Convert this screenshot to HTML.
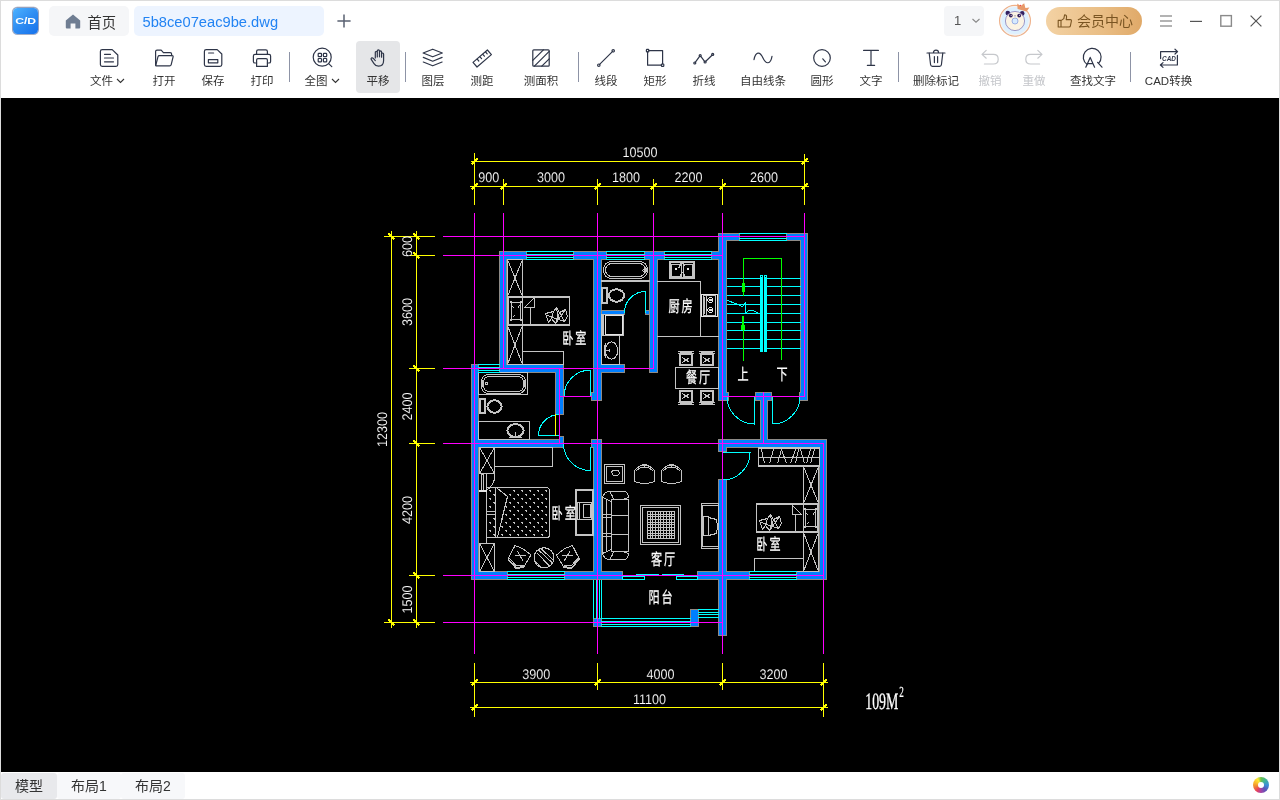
<!DOCTYPE html>
<html lang="zh-CN">
<head>
<meta charset="utf-8">
<title>5b8ce07eac9be.dwg</title>
<style>
*{box-sizing:border-box;margin:0;padding:0}
html,body{width:1280px;height:800px;overflow:hidden;background:#fff}
body{font-family:"Liberation Sans","Noto Sans CJK SC",sans-serif;color:#333;position:relative}
#win{position:absolute;left:0;top:0;width:1280px;height:800px;background:#fff;border:1px solid #dcdcdc}
.abs{position:absolute}
#ui{position:absolute;left:0;top:0;width:1280px;height:800px;will-change:transform}
#logo{left:12.5px;top:8px;width:25.5px;height:26px;border-radius:4.5px;background:linear-gradient(140deg,#4db2ff 0%,#2f8df2 50%,#1571ec 100%);box-shadow:0 0 0 1px rgba(112,128,170,.55),0 -.5px 0 1px rgba(90,105,140,.35)}
#logo svg{position:absolute;left:0;top:0}
.tab{top:6px;height:30px;border-radius:5px;font-size:14px;line-height:30px;white-space:nowrap}
#tab-home{left:49px;width:80px;background:#f5f6f8;color:#333}
#tab-home span{position:absolute;left:38.5px;top:1.5px;font-size:14.3px}
#tab-file{left:134px;width:190px;background:#edf4ff;color:#2283f3}
#tab-file span{position:absolute;left:8.5px;top:1px;font-size:14.7px;letter-spacing:0}
#sel{left:944px;top:6px;width:40px;height:30px;border-radius:4px;background:#f5f6f8;font-size:13px;line-height:29px;color:#444}
#vip{left:1046px;top:7px;width:96px;height:28px;border-radius:14px;background:linear-gradient(90deg,#f3d2a4 0%,#e9bd84 60%,#e0a968 100%);color:#7a5522;font-size:14px;line-height:28px}
.tool{top:41px;height:52px;text-align:center;font-size:11.5px;color:#333;white-space:nowrap}
.tool .lb{position:absolute;left:-20px;right:-20px;top:32px;line-height:16px;text-align:center}
.tool svg{position:absolute;left:50%;top:5px;margin-left:-12px}
.tool.dis{color:#c3c5c9}
.sep{top:52px;width:1px;height:30px;background:#8d93a6}
#hl{left:356px;top:41px;width:44px;height:52px;border-radius:4px;background:#e5e6e8}
#cv{left:1px;top:98px;width:1278px;height:674px;background:#000;overflow:hidden;will-change:transform}
.btab{top:772px;height:27px;font-size:14px;line-height:27px;text-align:center;color:#333;background:#f7f8fa}
</style>
</head>
<body>
<div id="win"></div>
<div id="ui">
<div class="abs" id="logo"><svg width="26" height="26" viewBox="0 0 26 26"><text transform="translate(2.2,16) scale(1.32,1)" font-family="Liberation Sans,sans-serif" font-size="9.2" font-weight="bold" fill="#fff">C/D</text></svg></div>
<div class="abs tab" id="tab-home"><svg class="abs" style="left:16px;top:7.5px" width="16" height="15" viewBox="0 0 16 15"><path d="M8 .6 L15.2 6.6 V13.4 Q15.2 14.4 14.2 14.4 H10.4 V9.6 H5.6 V14.4 H1.8 Q.8 14.4 .8 13.4 V6.6 Z" fill="#6f7d92"/></svg><span>首页</span></div>
<div class="abs tab" id="tab-file"><span>5b8ce07eac9be.dwg</span></div>
<svg class="abs" style="left:336px;top:13px" width="16" height="16" viewBox="0 0 16 16"><path d="M8 1.4 V14.6 M1.4 8 H14.6" stroke="#5a6172" stroke-width="1.5" fill="none"/></svg>
<div class="abs" id="sel"><span class="abs" style="left:10px;top:0;color:#555;font-size:13px">1</span><svg class="abs" style="left:27px;top:11px" width="10" height="8" viewBox="0 0 10 8"><path d="M1.5 2 L5 5.2 L8.5 2" fill="none" stroke="#888" stroke-width="1.1"/></svg></div>
<svg class="abs" style="left:996px;top:0" width="40" height="40" viewBox="0 0 40 40">
<circle cx="19" cy="20.7" r="15.4" fill="#ddf0ff" stroke="#efb088" stroke-width="1.2"/>
<circle cx="19" cy="20.7" r="14.3" fill="none" stroke="#fdf3ea" stroke-width=".9"/>
<circle cx="11.8" cy="13.1" r="2.3" fill="#33205f"/><circle cx="26.2" cy="13.4" r="2.3" fill="#33205f"/>
<circle cx="19" cy="21" r="9.6" fill="#fbf3e4" stroke="#6a5aa8" stroke-width=".6"/>
<circle cx="14.8" cy="15.6" r="1.9" fill="#33205f"/><circle cx="23.2" cy="15.6" r="1.9" fill="#33205f"/>
<circle cx="15.2" cy="15.2" r=".55" fill="#fff"/><circle cx="23.6" cy="15.2" r=".55" fill="#fff"/>
<ellipse cx="19" cy="15.8" rx=".8" ry=".6" fill="#8a8a96"/>
<circle cx="19" cy="21" r="3" fill="#d6eaff" stroke="#8a9fe0" stroke-width=".8"/>
<path d="M21.6 9 L21.2 3.4 L24.6 6 L28.2 3.2 L29.4 8 L33.4 7.4 L30.6 11.6 Z" fill="#e8996a"/>
<circle cx="24.4" cy="5.4" r=".6" fill="#f03a4a"/>
</svg>
<div class="abs" id="vip"><svg class="abs" style="left:11px;top:6px" width="16" height="16" viewBox="0 0 16 16" fill="none" stroke="#7a5522" stroke-width="1.1" stroke-linejoin="round"><path d="M1.2 7.4 H4 V14 H1.2 Z M4 7.6 L6.8 5.6 L7.6 1.8 Q9.6 1.8 9.6 4 L9.2 6.6 H13.2 Q14.6 6.6 14.4 8 L13.4 12.8 Q13.2 14 12 14 H4"/></svg><span class="abs" style="left:31px;top:0">会员中心</span></div>
<svg class="abs" style="left:1150px;top:9px" width="120" height="24" viewBox="0 0 120 24" fill="none">
<path d="M10 7 H22 M10 12 H22 M10 17 H22" stroke="#9a9a9a" stroke-width="1.3"/>
<path d="M40 12.4 H52" stroke="#555" stroke-width="1.2"/>
<rect x="70.8" y="6.6" width="10.6" height="10.6" stroke="#8a8a8a" stroke-width="1.4"/>
<path d="M100.6 6.6 L111.4 17.4 M111.4 6.6 L100.6 17.4" stroke="#555" stroke-width="1.2"/>
</svg>
<div class="abs" id="hl"></div>
<div class="abs tool" style="left:87px;width:44px"><svg width="24" height="24" viewBox="0 0 24 24" fill="none" stroke="#2e3548" stroke-width="1.2" stroke-linecap="round" stroke-linejoin="round"><path d="M5.2 3.6 H15.2 L20.8 9 V18.6 Q20.8 20.4 19 20.4 H5.2 Q3.4 20.4 3.4 18.6 V5.4 Q3.4 3.6 5.2 3.6Z"/><path d="M7.5 8.3 H13.5 M7.5 12 H16.5 M7.5 15.8 H16.5"/></svg><div class="lb" style="left:-23px">文件<svg class="chv" width="9" height="8" viewBox="0.5 0 9 8" style="position:static;display:inline-block;margin:0 0 0 3px;vertical-align:0"><path d="M1.5 2 L5 5.5 L8.5 2" fill="none" stroke="#333" stroke-width="1.1"/></svg></div></div>
<div class="abs tool" style="left:142.0px;width:44px"><svg width="24" height="24" viewBox="0 0 24 24" fill="none" stroke="#2e3548" stroke-width="1.2" stroke-linecap="round" stroke-linejoin="round"><path d="M3.6 19 V5.6 Q3.6 4.2 5 4.2 H9.2 L11.4 6.6 H18.2 Q19.6 6.6 19.6 8 V9.6"/><path d="M3.7 19.6 L6 10.6 Q6.3 9.6 7.4 9.6 H20 Q21.4 9.6 21.1 10.9 L19.2 18.6 Q18.9 19.9 17.6 19.9 H4.6 Q3.6 19.9 3.7 19.2"/></svg><div class="lb">打开</div></div>
<div class="abs tool" style="left:191.0px;width:44px"><svg width="24" height="24" viewBox="0 0 24 24" fill="none" stroke="#2e3548" stroke-width="1.2" stroke-linecap="round" stroke-linejoin="round"><path d="M5.2 3.6 H16.2 L20.8 8 V18.6 Q20.8 20.4 19 20.4 H5.2 Q3.4 20.4 3.4 18.6 V5.4 Q3.4 3.6 5.2 3.6Z"/><path d="M7.6 7 H12.6"/><rect x="7.4" y="13.6" width="9.4" height="3.2"/></svg><div class="lb">保存</div></div>
<div class="abs tool" style="left:240.0px;width:44px"><svg width="24" height="24" viewBox="0 0 24 24" fill="none" stroke="#2e3548" stroke-width="1.2" stroke-linecap="round" stroke-linejoin="round"><path d="M6.6 8.4 V5.4 Q6.6 3.8 8.2 3.8 H15.8 Q17.4 3.8 17.4 5.4 V8.4"/><path d="M6.6 17 H5 Q3.4 17 3.4 15.4 V10 Q3.4 8.4 5 8.4 H19 Q20.6 8.4 20.6 10 V15.4 Q20.6 17 19 17 H17.4"/><path d="M6.6 20.4 V14 Q6.6 12.6 8 12.6 H16 Q17.4 12.6 17.4 14 V20.4 Z"/></svg><div class="lb">打印</div></div>
<div class="abs tool" style="left:300.0px;width:44px"><svg width="24" height="24" viewBox="0 0 24 24" fill="none" stroke="#2e3548" stroke-width="1.2" stroke-linecap="round" stroke-linejoin="round"><circle cx="12.2" cy="11.2" r="9"/><path d="M18.7 17.6 L21.8 20.7"/><rect x="8.2" y="7.3" width="3.3" height="3.3" rx=".6"/><rect x="13.4" y="7.3" width="3.3" height="3.3" rx=".6"/><rect x="8.2" y="12.5" width="3.3" height="3.3" rx=".6"/><rect x="13.4" y="12.5" width="3.3" height="3.3" rx=".6"/></svg><div class="lb">全图<svg class="chv" width="9" height="8" viewBox="0.5 0 9 8" style="position:static;display:inline-block;margin:0 0 0 3px;vertical-align:0"><path d="M1.5 2 L5 5.5 L8.5 2" fill="none" stroke="#333" stroke-width="1.1"/></svg></div></div>
<div class="abs tool" style="left:356.0px;width:44px"><svg width="24" height="24" viewBox="0 0 24 24" fill="none" stroke="#2e3548" stroke-width="1.2" stroke-linecap="round" stroke-linejoin="round"><path d="M9.3 12 V6.6 Q9.3 5.5 10.3 5.5 Q11.3 5.5 11.3 6.6 V11 M11.3 10.8 V5 Q11.3 3.9 12.4 3.9 Q13.5 3.9 13.5 5 V10.8 M13.5 10.8 V5.9 Q13.5 4.9 14.5 4.9 Q15.6 4.9 15.6 5.9 V11.2 M15.6 11.2 V8 Q15.6 7 16.6 7 Q17.6 7 17.6 8 V14.6 Q17.6 20.2 12.6 20.2 Q9.6 20.2 8 17.6 L5.2 13.4 Q4.7 12.4 5.6 11.9 Q6.5 11.5 7.3 12.4 L9.3 14.6"/></svg><div class="lb">平移</div></div>
<div class="abs tool" style="left:411.0px;width:44px"><svg width="24" height="24" viewBox="0 0 24 24" fill="none" stroke="#2e3548" stroke-width="1.2" stroke-linecap="round" stroke-linejoin="round"><path d="M11.7 3.2 L21.3 7 L11.7 10.8 L2.1 7 Z"/><path d="M2.3 11.4 L11.7 15.2 L21.1 11.4"/><path d="M2.3 16 L11.7 19.8 L21.1 16"/></svg><div class="lb">图层</div></div>
<div class="abs tool" style="left:460.0px;width:44px"><svg width="24" height="24" viewBox="0 0 24 24" fill="none" stroke="#2e3548" stroke-width="1.2" stroke-linecap="round" stroke-linejoin="round"><path d="M3 16.4 L17.4 4 L21.4 8.6 L7 21 Z"/><path d="M7.2 13.2 L8.8 15 M10 10.8 L11.6 12.6 M12.8 8.4 L14.4 10.2 M15.6 6 L17.2 7.8"/></svg><div class="lb">测距</div></div>
<div class="abs tool" style="left:519.0px;width:44px"><svg width="24" height="24" viewBox="0 0 24 24" fill="none" stroke="#2e3548" stroke-width="1.2" stroke-linecap="round" stroke-linejoin="round"><rect x="3.8" y="3.8" width="16.4" height="16.4" rx="1"/><path d="M3.8 14.4 L14.4 3.8 M5.4 20.2 L20.2 5.4 M12.8 20.2 L20.2 12.8"/></svg><div class="lb">测面积</div></div>
<div class="abs tool" style="left:584.0px;width:44px"><svg width="24" height="24" viewBox="0 0 24 24" fill="none" stroke="#2e3548" stroke-width="1.2" stroke-linecap="round" stroke-linejoin="round"><path d="M5.6 18.4 L18.4 5.6"/><circle cx="4.8" cy="19.2" r="1.2"/><circle cx="19.2" cy="4.8" r="1.2"/></svg><div class="lb">线段</div></div>
<div class="abs tool" style="left:633.0px;width:44px"><svg width="24" height="24" viewBox="0 0 24 24" fill="none" stroke="#2e3548" stroke-width="1.2" stroke-linecap="round" stroke-linejoin="round"><path d="M4.6 5.8 V19.2 H18.4 M19.6 18 V4.6 H5.8"/><rect x="3.4" y="3.4" width="2.4" height="2.4" rx=".6"/><rect x="18.4" y="18" width="2.4" height="2.4" rx=".6"/></svg><div class="lb">矩形</div></div>
<div class="abs tool" style="left:682.0px;width:44px"><svg width="24" height="24" viewBox="0 0 24 24" fill="none" stroke="#2e3548" stroke-width="1.2" stroke-linecap="round" stroke-linejoin="round"><path d="M3.4 16.2 L7.6 10.4 M9 10.6 L12.4 15.2 M13.8 15.2 L20 9.2"/><circle cx="2.8" cy="17" r="1"/><circle cx="8.2" cy="9.6" r="1"/><circle cx="13.1" cy="16" r="1"/><circle cx="20.7" cy="8.4" r="1"/></svg><div class="lb">折线</div></div>
<div class="abs tool" style="left:741.0px;width:44px"><svg width="24" height="24" viewBox="0 0 24 24" fill="none" stroke="#2e3548" stroke-width="1.2" stroke-linecap="round" stroke-linejoin="round"><path d="M3 13.6 C4.6 5.6 8.8 5 12 12 C15 18.6 19.6 18.6 21 10.4"/></svg><div class="lb">自由线条</div></div>
<div class="abs tool" style="left:800.0px;width:44px"><svg width="24" height="24" viewBox="0 0 24 24" fill="none" stroke="#2e3548" stroke-width="1.2" stroke-linecap="round" stroke-linejoin="round"><circle cx="12" cy="12" r="8.3"/><path d="M12.8 12.8 L15.4 15.8"/></svg><div class="lb">圆形</div></div>
<div class="abs tool" style="left:849.0px;width:44px"><svg width="24" height="24" viewBox="0 0 24 24" fill="none" stroke="#2e3548" stroke-width="1.2" stroke-linecap="round" stroke-linejoin="round"><path d="M4.6 4.4 H19.4 M12 4.4 V19.4 M8.4 19.4 H15.6"/></svg><div class="lb">文字</div></div>
<div class="abs tool" style="left:914.0px;width:44px"><svg width="24" height="24" viewBox="0 0 24 24" fill="none" stroke="#2e3548" stroke-width="1.2" stroke-linecap="round" stroke-linejoin="round"><path d="M3 7 H21 M9.4 7 Q9.4 4.2 12 4.2 Q14.6 4.2 14.6 7"/><path d="M5.2 7 L6.6 18.8 Q6.8 20.4 8.4 20.4 H15.6 Q17.2 20.4 17.4 18.8 L18.8 7"/><path d="M10.4 10.6 V16.6 M13.6 10.6 V16.6"/></svg><div class="lb">删除标记</div></div>
<div class="abs tool dis" style="left:968.0px;width:44px"><svg width="24" height="24" viewBox="0 0 24 24" fill="none" stroke="#c6c8cc" stroke-width="1.2" stroke-linecap="round" stroke-linejoin="round"><path d="M8.2 4.4 L4 8.4 L8.2 12.2 M4.4 8.4 H15.4 Q20.2 8.4 20.2 13.2 Q20.2 18 15.4 18 H6.4"/></svg><div class="lb">撤销</div></div>
<div class="abs tool dis" style="left:1012.0px;width:44px"><svg width="24" height="24" viewBox="0 0 24 24" fill="none" stroke="#c6c8cc" stroke-width="1.2" stroke-linecap="round" stroke-linejoin="round"><path d="M15.8 4.4 L20 8.4 L15.8 12.2 M19.6 8.4 H8.6 Q3.8 8.4 3.8 13.2 Q3.8 18 8.6 18 H17.6"/></svg><div class="lb">重做</div></div>
<div class="abs tool" style="left:1071.0px;width:44px"><svg width="24" height="24" viewBox="0 0 24 24" fill="none" stroke="#2e3548" stroke-width="1.2" stroke-linecap="round" stroke-linejoin="round"><path d="M6.2 18.6 A8.9 8.9 0 1 1 17.6 17.4 M16.6 16.4 L21 21.2"/><path d="M4.8 21.2 L9.2 11.4 L13.6 21.2 M6.5 17.6 H11.9"/></svg><div class="lb">查找文字</div></div>
<div class="abs tool" style="left:1146.5px;width:44px"><svg width="24" height="24" viewBox="0 0 24 24" fill="none" stroke="#2e3548" stroke-width="1.2" stroke-linecap="round" stroke-linejoin="round"><path d="M3.6 12.6 V5.6 H20.4 M18 3.2 L20.6 5.6 L18 8"/><path d="M20.4 9.4 V19 H3.6 M6 16.6 L3.4 19 L6 21.4"/><text x="12" y="14.6" font-family="Liberation Sans,sans-serif" font-size="6.4" font-weight="bold" font-style="italic" text-anchor="middle" fill="#2e3548" stroke="none">CAD</text></svg><div class="lb">CAD转换</div></div>
<div class="abs sep" style="left:289px"></div>
<div class="abs sep" style="left:405px"></div>
<div class="abs sep" style="left:578px"></div>
<div class="abs sep" style="left:898px"></div>
<div class="abs sep" style="left:1130px"></div>
<div class="abs btab" style="left:1px;width:56px;background:#e8e9ec;border-radius:3px;top:773px;height:26px;line-height:26px">模型</div>
<div class="abs btab" style="left:57px;width:64px;border-radius:3px;top:773px;height:26px;line-height:26px">布局1</div>
<div class="abs btab" style="left:121px;width:64px;border-radius:3px;top:773px;height:26px;line-height:26px">布局2</div>
<div class="abs" style="left:1253px;top:777px;width:16px;height:16px;border-radius:50%;background:conic-gradient(#6cc04a,#3fb49a 12%,#3b8fd8 25%,#5a55b8 38%,#a443a8 50%,#e8415a 60%,#f08a32 72%,#fbc02d 82%,#fdea3a 92%,#6cc04a)"><div class="abs" style="left:5px;top:5px;width:6px;height:6px;border-radius:50%;background:#fff"></div></div>
</div>
<div class="abs" id="cv"><svg width="1278" height="674" viewBox="1 98 1278 674" style="position:absolute;left:0;top:0">
<g shape-rendering="crispEdges">
<rect x="499" y="251" width="8" height="122" fill="#8e8a86"/><rect x="499" y="251" width="28" height="9" fill="#8e8a86"/><rect x="573" y="251" width="34" height="9" fill="#8e8a86"/><rect x="644" y="251" width="21" height="9" fill="#8e8a86"/><rect x="711" y="251" width="12" height="9" fill="#8e8a86"/><rect x="593" y="251" width="9" height="150" fill="#8e8a86"/><rect x="591" y="392" width="11" height="9" fill="#8e8a86"/><rect x="649" y="251" width="9" height="122" fill="#8e8a86"/><rect x="718" y="233" width="9" height="168" fill="#8e8a86"/><rect x="718" y="392" width="11" height="9" fill="#8e8a86"/><rect x="718" y="233" width="22" height="8" fill="#8e8a86"/><rect x="786" y="233" width="22" height="8" fill="#8e8a86"/><rect x="800" y="233" width="8" height="168" fill="#8e8a86"/><rect x="799" y="392" width="9" height="9" fill="#8e8a86"/><rect x="755" y="392" width="17" height="9" fill="#8e8a86"/><rect x="760" y="396" width="8" height="48" fill="#8e8a86"/><rect x="593" y="364" width="32" height="9" fill="#8e8a86"/><rect x="601" y="310" width="24" height="5" fill="#8e8a86"/><rect x="645" y="310" width="5" height="5" fill="#8e8a86"/><rect x="471" y="364" width="8" height="9" fill="#8e8a86"/><rect x="499" y="364" width="65" height="9" fill="#8e8a86"/><rect x="471" y="364" width="8" height="216" fill="#8e8a86"/><rect x="555" y="364" width="9" height="51" fill="#8e8a86"/><rect x="559" y="436" width="5" height="8" fill="#8e8a86"/><rect x="471" y="439" width="93" height="9" fill="#8e8a86"/><rect x="591" y="439" width="11" height="9" fill="#8e8a86"/><rect x="593" y="439" width="9" height="141" fill="#8e8a86"/><rect x="471" y="571" width="37" height="9" fill="#8e8a86"/><rect x="564" y="571" width="59" height="9" fill="#8e8a86"/><rect x="697" y="571" width="53" height="9" fill="#8e8a86"/><rect x="796" y="571" width="31" height="9" fill="#8e8a86"/><rect x="718" y="439" width="9" height="13" fill="#8e8a86"/><rect x="718" y="479" width="9" height="157" fill="#8e8a86"/><rect x="718" y="439" width="109" height="9" fill="#8e8a86"/><rect x="819" y="439" width="8" height="141" fill="#8e8a86"/><rect x="593" y="618" width="9" height="9" fill="#8e8a86"/><rect x="690" y="609" width="9" height="18" fill="#8e8a86"/>
<rect x="500" y="252" width="6" height="120" fill="#007fff"/><rect x="500" y="252" width="26" height="7" fill="#007fff"/><rect x="574" y="252" width="32" height="7" fill="#007fff"/><rect x="645" y="252" width="19" height="7" fill="#007fff"/><rect x="712" y="252" width="10" height="7" fill="#007fff"/><rect x="594" y="252" width="7" height="148" fill="#007fff"/><rect x="592" y="393" width="9" height="7" fill="#007fff"/><rect x="650" y="252" width="7" height="120" fill="#007fff"/><rect x="719" y="234" width="7" height="166" fill="#007fff"/><rect x="719" y="393" width="9" height="7" fill="#007fff"/><rect x="719" y="234" width="20" height="6" fill="#007fff"/><rect x="787" y="234" width="20" height="6" fill="#007fff"/><rect x="801" y="234" width="6" height="166" fill="#007fff"/><rect x="800" y="393" width="7" height="7" fill="#007fff"/><rect x="756" y="393" width="15" height="7" fill="#007fff"/><rect x="761" y="397" width="6" height="46" fill="#007fff"/><rect x="594" y="365" width="30" height="7" fill="#007fff"/><rect x="602" y="311" width="22" height="3" fill="#007fff"/><rect x="646" y="311" width="3" height="3" fill="#007fff"/><rect x="472" y="365" width="6" height="7" fill="#007fff"/><rect x="500" y="365" width="63" height="7" fill="#007fff"/><rect x="472" y="365" width="6" height="214" fill="#007fff"/><rect x="556" y="365" width="7" height="49" fill="#007fff"/><rect x="560" y="437" width="3" height="6" fill="#007fff"/><rect x="472" y="440" width="91" height="7" fill="#007fff"/><rect x="592" y="440" width="9" height="7" fill="#007fff"/><rect x="594" y="440" width="7" height="139" fill="#007fff"/><rect x="472" y="572" width="35" height="7" fill="#007fff"/><rect x="565" y="572" width="57" height="7" fill="#007fff"/><rect x="698" y="572" width="51" height="7" fill="#007fff"/><rect x="797" y="572" width="29" height="7" fill="#007fff"/><rect x="719" y="440" width="7" height="11" fill="#007fff"/><rect x="719" y="480" width="7" height="155" fill="#007fff"/><rect x="719" y="440" width="107" height="7" fill="#007fff"/><rect x="820" y="440" width="6" height="139" fill="#007fff"/><rect x="594" y="619" width="7" height="7" fill="#007fff"/><rect x="691" y="610" width="7" height="16" fill="#007fff"/>
<path d="M507.5 259.5H522.5V296.5H507.5ZM507.5 259.5L522.5 296.5M522.5 259.5L507.5 296.5M507.5 325.5H522.5V364.5H507.5ZM507.5 325.5L522.5 364.5M522.5 325.5L507.5 364.5M507.5 296.5H569.5V325.5H507.5ZM507 297.5H570M507 324.5H570M508.5 296V326M522.5 296V326M510.5 301.5L512.5 302.5L519.5 302.5L521.5 301.5L520.5 304.5L520.5 317.5L521.5 320.5L519.5 319.5L512.5 319.5L510.5 320.5L511.5 317.5L511.5 304.5ZM512.5 306.5L514.5 308.5M519.5 305.5L517.5 308.5M512.5 317.5L514.5 315.5M523.5 308.5L534.5 297.5L534.5 307.5L524.5 307.5M530.5 307V326M545.5 313.5L553.5 311.5L556.5 307.5L559.5 312.5L565.5 309.5L567.5 316.5L564.5 321.5L558.5 319.5L555.5 323.5L551.5 318.5L548.5 322.5L545.5 313.5M547.5 315.5L558.5 319.5M553.5 311.5L551.5 318.5M556.5 307.5L558.5 319.5M559.5 312.5L564.5 321.5M565.5 309.5L558.5 319.5M555.5 323.5L559.5 312.5M522.5 351.5H563.5V364.5H522.5ZM601 281.5H650M601 280.5H650M611.5 261.5H639.5A8 8 0 0 1 647.5 269.5V270.5A8 8 0 0 1 639.5 278.5H611.5A8 8 0 0 1 603.5 270.5V269.5A8 8 0 0 1 611.5 261.5ZM612.0 263.5H639.0A6.5 6.5 0 0 1 645.5 270.0V270.0A6.5 6.5 0 0 1 639.0 276.5H612.0A6.5 6.5 0 0 1 605.5 270.0V270.0A6.5 6.5 0 0 1 612.0 263.5ZM642.5 270.5L644.5 268.5L644.5 272.5ZM646.5 268.5H647.5V271.5H646.5ZM601.5 287.5H607.5V303.5H601.5ZM602.5 288.5H606.5V302.5H602.5ZM601.5 314.5H623.5V335.5H601.5ZM602.5 315V335M603.5 315V335M601.5 335.5H619.5V364.5H601.5ZM605.3 350.5A6.2 8.6 0 1 0 617.7 350.5A6.2 8.6 0 1 0 605.3 350.5ZM604.5 345V356M605.5 343V358M606 350.5H610M609.5 349V352M669.5 261.5H694.5V278.5H669.5ZM670.5 262.5H693.5V277.5H670.5ZM671.5 264.5H681.5V276.5H671.5ZM683.5 264.5H692.5V276.5H683.5ZM681.5 262.5L678.5 268.5M682.5 262.5L684.5 266.5M679.5 276.5L682.5 272.5M682.5 272.5L685.5 276.5M657 281.5H701M700.5 281V337M657 336.5H719M703.5 295.5H715.5V315.5H703.5ZM704.5 297V314M706.5 296V315M675.5 367.5H718.5V388.5H675.5ZM678 351.5H694M680 352.5H692M678 353.5H694M679.5 354.5H692.5V365.5H679.5ZM680.5 354.5H691.5V364.5H680.5ZM682.5 357.5L689.5 362.5M689.5 357.5L682.5 362.5M699 351.5H715M701 352.5H713M699 353.5H715M700.5 354.5H713.5V365.5H700.5ZM701.5 354.5H712.5V364.5H701.5ZM703.5 357.5L710.5 362.5M710.5 357.5L703.5 362.5M678 404.5H694M680 403.5H692M678 402.5H694M679.5 390.5H692.5V401.5H679.5ZM680.5 391.5H691.5V401.5H680.5ZM682.5 393.5L689.5 398.5M689.5 393.5L682.5 398.5M699 404.5H715M701 403.5H713M699 402.5H715M700.5 390.5H713.5V401.5H700.5ZM701.5 391.5H712.5V401.5H701.5ZM703.5 393.5L710.5 398.5M710.5 393.5L703.5 398.5M478.5 372.5H527.5V394.5H478.5ZM488.5 374.5H518.5A7 7 0 0 1 525.5 381.5V386.5A7 7 0 0 1 518.5 393.5H488.5A7 7 0 0 1 481.5 386.5V381.5A7 7 0 0 1 488.5 374.5ZM489.0 376.5H518.0A5.5 5.5 0 0 1 523.5 382.0V386.0A5.5 5.5 0 0 1 518.0 391.5H489.0A5.5 5.5 0 0 1 483.5 386.0V382.0A5.5 5.5 0 0 1 489.0 376.5ZM481.5 380.5H482.5V386.5H481.5ZM523.5 380.5H524.5V386.5H523.5ZM485.5 383.5A1 1 0 1 0 487.5 383.5A1 1 0 1 0 485.5 383.5ZM479.5 398.5H485.5V413.5H479.5ZM480.5 399.5H484.5V412.5H480.5ZM478.5 421.5H529.5V439.5H478.5ZM509 437.5H522M515.5 432V437M479.5 447.5H494.5V473.5H479.5ZM479.5 447.5L494.5 473.5M494.5 447.5L479.5 473.5M494.5 447.5H552.5V466.5H494.5ZM481.5 474.5H483.5V490.5H481.5ZM486.5 474V491M494.5 473.5A17 17 0 0 1 486.5 490.5M479.5 543.5H494.5V571.5H479.5ZM479.5 543.5L494.5 571.5M494.5 543.5L479.5 571.5M486.5 537V544M486.5 487.5H546.5A3 3 0 0 1 549.5 490.5V534.5A3 3 0 0 1 546.5 537.5H486.5ZM495.5 487V538M486 511.5H496M486 514.5H496M497.5 488.5L507.5 496.5L503.5 512.5L497.5 537.5M489 490.5H491M490.5 490V492M513 490.5H515M514.5 490V492M521 490.5H523M522.5 490V492M529 490.5H531M530.5 490V492M537 490.5H539M538.5 490V492M545 490.5H547M546.5 490V492M493 494.5H495M494.5 494V496M509 494.5H511M510.5 494V496M517 494.5H519M518.5 494V496M525 494.5H527M526.5 494V496M533 494.5H535M534.5 494V496M541 494.5H543M542.5 494V496M489 498.5H491M490.5 498V500M513 498.5H515M514.5 498V500M521 498.5H523M522.5 498V500M529 498.5H531M530.5 498V500M537 498.5H539M538.5 498V500M545 498.5H547M546.5 498V500M493 502.5H495M494.5 502V504M509 502.5H511M510.5 502V504M517 502.5H519M518.5 502V504M525 502.5H527M526.5 502V504M533 502.5H535M534.5 502V504M541 502.5H543M542.5 502V504M489 506.5H491M490.5 506V508M505 506.5H507M506.5 506V508M513 506.5H515M514.5 506V508M521 506.5H523M522.5 506V508M529 506.5H531M530.5 506V508M537 506.5H539M538.5 506V508M545 506.5H547M546.5 506V508M509 510.5H511M510.5 510V512M517 510.5H519M518.5 510V512M525 510.5H527M526.5 510V512M533 510.5H535M534.5 510V512M541 510.5H543M542.5 510V512M505 514.5H507M506.5 514V516M513 514.5H515M514.5 514V516M521 514.5H523M522.5 514V516M529 514.5H531M530.5 514V516M537 514.5H539M538.5 514V516M545 514.5H547M546.5 514V516M493 518.5H495M494.5 518V520M501 518.5H503M502.5 518V520M509 518.5H511M510.5 518V520M517 518.5H519M518.5 518V520M525 518.5H527M526.5 518V520M533 518.5H535M534.5 518V520M541 518.5H543M542.5 518V520M489 522.5H491M490.5 522V524M505 522.5H507M506.5 522V524M513 522.5H515M514.5 522V524M521 522.5H523M522.5 522V524M529 522.5H531M530.5 522V524M537 522.5H539M538.5 522V524M545 522.5H547M546.5 522V524M493 526.5H495M494.5 526V528M501 526.5H503M502.5 526V528M509 526.5H511M510.5 526V528M517 526.5H519M518.5 526V528M525 526.5H527M526.5 526V528M533 526.5H535M534.5 526V528M541 526.5H543M542.5 526V528M489 530.5H491M490.5 530V532M505 530.5H507M506.5 530V532M513 530.5H515M514.5 530V532M521 530.5H523M522.5 530V532M529 530.5H531M530.5 530V532M537 530.5H539M538.5 530V532M545 530.5H547M546.5 530V532M493 534.5H495M494.5 534V536M501 534.5H503M502.5 534V536M509 534.5H511M510.5 534V536M517 534.5H519M518.5 534V536M525 534.5H527M526.5 534V536M533 534.5H535M534.5 534V536M541 534.5H543M542.5 534V536M515.0 545.5L522.5 548.5L531.0 555.0L524.0 566.5L516.0 567.5L508.0 559.0ZM509.0 558.0L516.5 566.0L523.5 565.3M508.5 560.0L516.0 568.5L524.0 567.5M514.5 555.5L525.5 555.5M517.5 551.5L523.5 561.5M572.4000000000001 545.5L564.9000000000001 548.5L556.4000000000001 555.0L563.4000000000001 566.5L571.4000000000001 567.5L579.4000000000001 559.0ZM578.4000000000001 558.0L570.9000000000001 566.0L563.9000000000001 565.3M578.9000000000001 560.0L571.4000000000001 568.5L563.4000000000001 567.5M572.9000000000001 555.5L561.9000000000001 555.5M569.9000000000001 551.5L563.9000000000001 561.5M534.0 557.8A10 10 0 1 0 554.0 557.8A10 10 0 1 0 534.0 557.8ZM541.5 549.0L553.0 560.0M538.5 550.0L552.5 563.0M537.5 553.5L549.0 565.5M534.5 560.5L540.5 567.0M575.5 489.5H593.5V535.5H575.5ZM576.5 490.5H592.5V534.5H576.5ZM577.5 502.5H591.5V519.5H577.5ZM579.5 503V519M583.5 504.5H590.5V517.5H583.5ZM604.5 464.5H624.5V483.5H604.5ZM606.5 466.5H622.5V481.5H606.5ZM612.5 470.5L618.5 470.5L619.5 473.5L617.5 475.5L613.5 475.5L611.5 472.5ZM634.5 481.5V470.5Q644.5 459.5 654.5 470.5V481.5Q644.5 485.5 634.5 481.5M635.5 471.5Q644.5 462.5 653.5 471.5M642 464.5H647M661.5 481.5V470.5Q671.5 459.5 681.5 470.5V481.5Q671.5 485.5 661.5 481.5M662.5 471.5Q671.5 462.5 680.5 471.5M669 464.5H674M611.5 499.5H628.5V551.5H611.5ZM611 515.5H629M611 534.5H629M602.5 497V554M606.5 500V551M602 517.5H612M602 536.5H612M602 514.5H612M602 533.5H612M602.5 497.5Q604.5 491.5 609.5 491.5Q612.5 495.5 613.5 499.5M609.5 491.5H624.5Q628.5 492.5 628.5 497.5Q622.5 500.5 613.5 499.5M602.5 497.5L611.5 501.5M602.5 553.5Q604.5 559.5 609.5 559.5Q612.5 555.5 613.5 551.5M609.5 559.5H624.5Q628.5 558.5 628.5 553.5Q622.5 550.5 613.5 551.5M602.5 553.5L611.5 549.5M640.5 505.5H680.5V544.5H640.5ZM642.5 507.5H678.5V542.5H642.5ZM647.5 511V539M647 511.5H675M650.5 511V539M647 514.5H675M652.5 511V539M647 516.5H675M655.5 511V539M647 519.5H675M658.5 511V539M647 522.5H675M660.5 511V539M647 524.5H675M663.5 511V539M647 527.5H675M666.5 511V539M647 530.5H675M669.5 511V539M647 533.5H675M671.5 511V539M647 535.5H675M674.5 511V539M647 538.5H675M701.5 503.5H718.5V548.5H701.5ZM702.5 505.5H718.5V546.5H702.5ZM703.5 516.5H708.5V535.5H703.5ZM708.5 517.5L716.5 519.5L717.5 526.5L716.5 533.5L708.5 535.5M758.5 447.5H819.5V466.5H758.5ZM758 457.5H820M758 448.5H820M758 465.5H820M761.5 449.5L764.5 463.5M773.5 449.5L769.5 463.5M781.5 449.5L777.5 463.5M781.5 449.5L786.5 463.5M795.5 449.5L790.5 463.5M798.5 449.5L795.5 463.5M800.5 449.5L804.5 463.5M810.5 449.5L806.5 463.5M814.5 449.5L810.5 463.5M803.5 466.5H818.5V503.5H803.5ZM803.5 466.5L818.5 503.5M818.5 466.5L803.5 503.5M803.5 532.5H818.5V571.5H803.5ZM803.5 532.5L818.5 571.5M818.5 532.5L803.5 571.5M756.5 503.5H818.5V532.5H756.5ZM756 504.5H819M756 531.5H819M817.5 503V533M803.5 503V533M804.5 508.5L806.5 509.5L814.5 509.5L816.5 508.5L815.5 511.5L815.5 524.5L816.5 527.5L814.5 526.5L806.5 526.5L804.5 527.5L805.5 524.5L805.5 511.5ZM806.5 513.5L808.5 515.5M814.5 512.5L812.5 515.5M806.5 524.5L808.5 522.5M802.5 515.5L792.5 505.5L792.5 514.5L801.5 514.5M795.5 514V533M759.5 520.5L767.5 518.5L770.5 514.5L773.5 519.5L779.5 516.5L781.5 523.5L778.5 528.5L772.5 526.5L769.5 530.5L765.5 525.5L762.5 529.5L759.5 520.5M761.5 522.5L772.5 526.5M767.5 518.5L765.5 525.5M770.5 514.5L772.5 526.5M773.5 519.5L778.5 528.5M779.5 516.5L772.5 526.5M769.5 530.5L773.5 519.5M754.5 558.5H803.5V571.5H754.5Z" stroke="#c4c4c4" stroke-width="1" fill="none"/>
<path d="M609.0 295.5A7.5 6.2 0 1 0 624.0 295.5A7.5 6.2 0 1 0 609.0 295.5ZM487.3 406.5A7.2 6.2 0 1 0 501.7 406.5A7.2 6.2 0 1 0 487.3 406.5ZM507.3 430.5A8.2 6.4 0 1 0 523.7 430.5A8.2 6.4 0 1 0 507.3 430.5Z" stroke="#c4c4c4" stroke-width="2" fill="none"/>
<path d="M605.5 315.5H622.5V334.5H605.5ZM675.5 268.5H676.5V269.5H675.5ZM687.5 268.5H688.5V269.5H687.5ZM701.5 294.5H717.5V316.5H701.5ZM707.9 300.0A2.6 2.6 0 1 0 713.1 300.0A2.6 2.6 0 1 0 707.9 300.0ZM707.9 310.0A2.6 2.6 0 1 0 713.1 310.0A2.6 2.6 0 1 0 707.9 310.0ZM708.5 298.5L712.5 301.5M712.5 298.5L708.5 301.5M708.5 308.5L712.5 311.5M712.5 308.5L708.5 311.5" stroke="#e6e6e6" stroke-width="1" fill="none"/>
<path d="M479 490.5H487" stroke="#e6e6e6" stroke-width="2" fill="none"/>
<path d="M526 251.5H574M526 254.5H574M526 257.5H574M526 259.5H574M606 251.5H645M606 254.5H645M606 257.5H645M606 259.5H645M664 251.5H712M664 254.5H712M664 257.5H712M664 259.5H712M739 233.5H787M739 236.5H787M739 238.5H787M739 240.5H787M478 364.5H500M478 367.5H500M478 370.5H500M478 372.5H500M507 571.5H565M507 574.5H565M507 577.5H565M507 579.5H565M749 571.5H797M749 574.5H797M749 577.5H797M749 579.5H797M622.5 576.5H644.5V579.5H622.5ZM676.5 576.5H697.5V579.5H676.5ZM636 574.5H659M662 574.5H684M593.5 580V619M596.5 580V619M599.5 580V619M601.5 580V619M601 618.5H691M601 621.5H691M601 624.5H691M601 626.5H691M698 609.5H719M698 612.5H719M698 614.5H719M698 617.5H719M645.5 291V313M624.5 312.5A21 21 0 0 1 645.5 291.5M590.5 370V397M564.0 396.5A26.5 26.5 0 0 1 590.5 370.0M538 435.5H560M538.5 435.5A21 21 0 0 1 559.5 414.5M590.5 447V471M563.5 443.5A27 27 0 0 0 590.5 470.5M722 452.5H751M750.0 452.5A27.5 27.5 0 0 1 722.5 480.0M754.5 396V424M727.0 396.5A27.5 27.5 0 0 0 754.5 424.0M772.5 396V424M800.0 396.5A27.5 27.5 0 0 1 772.5 424.0M727 278.5H760M767 278.5H801M727 286.5H760M767 286.5H801M727 295.5H760M767 295.5H801M727 304.5H760M767 304.5H801M727 313.5H760M767 313.5H801M727 322.5H760M767 322.5H801M727 330.5H760M767 330.5H801M727 339.5H760M767 339.5H801M727 348.5H760M767 348.5H801M760.5 277V351M761.5 277V351M762.5 277V351M764.5 277V351M765.5 277V351M766.5 277V351M760.5 275.5H762.5V277.5H760.5ZM764.5 275.5H766.5V277.5H764.5ZM760 351.5H763M764 351.5H767M727.5 300.5L735.5 303.5L742.5 306.5L745.5 302.5L745.5 313.5L748.5 310.5L752.5 310.5L759.5 313.5" stroke="#00ffff" stroke-width="1" fill="none"/>
<path d="M555.5 414V436" stroke="#ffff00" stroke-width="1" fill="none"/>
<path d="M759 274.5H768" stroke="none" stroke-width="1" fill="none"/>
<path d="M743 258.5H782M743.5 258V296M781.5 258V360M743.5 316V361" stroke="#00ff00" stroke-width="1" fill="none"/>
<path d="M742 283H745V292H742Z" stroke="none" stroke-width="1" fill="none"/>
<rect x="742" y="283" width="3" height="9" fill="#00ff00"/><rect x="742" y="316" width="2" height="9" fill="#00ff00"/><rect x="741" y="325" width="4" height="5" fill="#00ff00"/><path d="M474.5 213V654M503.5 213V369M597.5 213V654M653.5 213V369M722.5 213V654M804.5 213V397M823.5 443V654M559.5 368V444M763.5 392V444M443 236.5H805M443 255.5H723M443 368.5H654M559 396.5H592M722 396.5H805M443 443.5H824M443 575.5H824M443 622.5H723" stroke="#ff00ff" stroke-width="1" fill="none"/>
<path d="M471 161.5H809M470 186.5H809M474.5 153V205M804.5 154V205M503.5 179V205M597.5 179V205M653.5 179V205M722.5 179V205M391.5 231V628M416.5 231V628M384 236.5H435M384 622.5H435M409 255.5H435M409 368.5H435M409 443.5H435M409 575.5H435M470 682.5H828M470 707.5H828M474.5 663V717M823.5 663V717M597.5 663V690M722.5 663V690" stroke="#ffff00" stroke-width="1" fill="none"/>
<path d="M471.5 164.5L477.5 158.5M801.5 164.5L807.5 158.5M471.5 189.5L477.5 183.5M500.5 189.5L506.5 183.5M594.5 189.5L600.5 183.5M650.5 189.5L656.5 183.5M719.5 189.5L725.5 183.5M801.5 189.5L807.5 183.5M388.5 233.5L394.5 239.5M413.5 233.5L419.5 239.5M413.5 252.5L419.5 258.5M413.5 365.5L419.5 371.5M413.5 440.5L419.5 446.5M413.5 572.5L419.5 578.5M388.5 619.5L394.5 625.5M413.5 619.5L419.5 625.5M471.5 685.5L477.5 679.5M594.5 685.5L600.5 679.5M719.5 685.5L725.5 679.5M820.5 685.5L826.5 679.5M471.5 710.5L477.5 704.5M820.5 710.5L826.5 704.5" stroke="#ffff00" stroke-width="2" fill="none"/>
</g>
<g fill="#fff" stroke="#000" stroke-width=".12" style="font-family:'Liberation Sans','Noto Sans CJK SC',sans-serif;text-rendering:geometricPrecision"><text transform="translate(640,157.3) scale(0.9,1)" text-anchor="middle" font-size="14">10500</text><text transform="translate(488.8,182.3) scale(0.9,1)" text-anchor="middle" font-size="14">900</text><text transform="translate(551,182.3) scale(0.9,1)" text-anchor="middle" font-size="14">3000</text><text transform="translate(626,182.3) scale(0.9,1)" text-anchor="middle" font-size="14">1800</text><text transform="translate(688.5,182.3) scale(0.9,1)" text-anchor="middle" font-size="14">2200</text><text transform="translate(764,182.3) scale(0.9,1)" text-anchor="middle" font-size="14">2600</text><text transform="translate(536.2,678.5) scale(0.9,1)" text-anchor="middle" font-size="14">3900</text><text transform="translate(660.5,678.5) scale(0.9,1)" text-anchor="middle" font-size="14">4000</text><text transform="translate(773.5,678.5) scale(0.9,1)" text-anchor="middle" font-size="14">3200</text><text transform="translate(649.5,703.5) scale(0.9,1)" text-anchor="middle" font-size="14">11100</text><text transform="translate(412.3,246.5) rotate(-90) scale(0.9,1)" text-anchor="middle" font-size="14">600</text><text transform="translate(412.3,312) rotate(-90) scale(0.9,1)" text-anchor="middle" font-size="14">3600</text><text transform="translate(412.3,406.5) rotate(-90) scale(0.9,1)" text-anchor="middle" font-size="14">2400</text><text transform="translate(412.3,510) rotate(-90) scale(0.9,1)" text-anchor="middle" font-size="14">4200</text><text transform="translate(412.3,599.5) rotate(-90) scale(0.9,1)" text-anchor="middle" font-size="14">1500</text><text transform="translate(387.3,429.5) rotate(-90) scale(0.9,1)" text-anchor="middle" font-size="14">12300</text><text stroke="#fff" stroke-width=".25" transform="translate(562.2,344.0) scale(.74,1.07)" font-size="15" letter-spacing="2.7">卧室</text><text stroke="#fff" stroke-width=".25" transform="translate(668.4,311.7) scale(.74,1.07)" font-size="15" letter-spacing="2.7">厨房</text><text stroke="#fff" stroke-width=".25" transform="translate(685.9,383.1) scale(.74,1.07)" font-size="15" letter-spacing="2.7">餐厅</text><text stroke="#fff" stroke-width=".25" transform="translate(737.6,380.1) scale(.74,1.07)" font-size="15" letter-spacing="2.7">上</text><text stroke="#fff" stroke-width=".25" transform="translate(776.6,380.1) scale(.74,1.07)" font-size="15" letter-spacing="2.7">下</text><text stroke="#fff" stroke-width=".25" transform="translate(551.6,518.5) scale(.74,1.07)" font-size="15" letter-spacing="2.7">卧室</text><text stroke="#fff" stroke-width=".25" transform="translate(650.9,565.1) scale(.74,1.07)" font-size="15" letter-spacing="2.7">客厅</text><text stroke="#fff" stroke-width=".25" transform="translate(648.4,602.9) scale(.74,1.07)" font-size="15" letter-spacing="2.7">阳台</text><text stroke="#fff" stroke-width=".25" transform="translate(756.3,549.5) scale(.74,1.07)" font-size="15" letter-spacing="2.7">卧室</text><text stroke="#fff" stroke-width=".3" transform="translate(865.2,709) scale(.59,1)" font-family="Liberation Serif,serif" font-size="23.5">109M<tspan dx="1.6" dy="-11.7" font-size="15.5" stroke-width=".2">2</tspan></text></g>
</svg></div>
</body>
</html>
